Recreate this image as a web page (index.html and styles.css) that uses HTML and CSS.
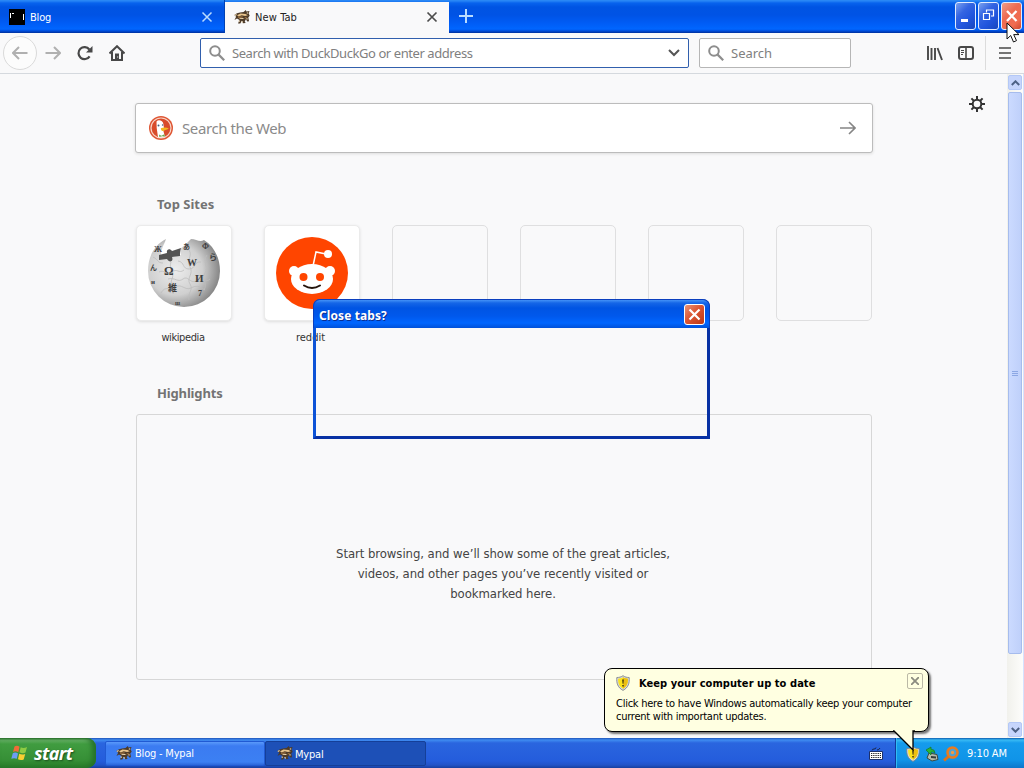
FILE: index.html
```html
<!DOCTYPE html>
<html lang="en">
<head>
    <meta charset="UTF-8">
    <meta name="viewport" content="width=device-width, initial-scale=1.0">
    <title>New Tab</title>
    <link rel="stylesheet" href="styles.css">
</head>
<body>

<!-- Shared icons -->
<svg class="icon-defs" width="0" height="0">
    <symbol id="badger" viewBox="0 0 16 16">
        <path d="M.3 6 3 4.200l3-.6 3.500-.6 2.400-2 .5 1.500L15.500 2l-.8 2.600 1 2.200-1.400 1.800.8 3.600-1.800.4-1.400-2.400-1.200 2.200 1 1.600-2.800.2-1-2.400-1.600 2.600H4L5.500 11 3 9.600.5 11l1.600-3.200z" fill="#4d3b29"/>
        <path d="M3 6.300 6.500 4.600l5 .4 2.400 1.200-2.800.8-3.400-.8-3 1.200z" fill="#e8c48c"/>
        <path d="m.8 6.400 1.800-.8M5.500 9.300l4 .2M12.800 4.200l1.400-.4M7.500 12.500l1.400.8M12.500 9.500l1 .8M4.500 12l1.500.2" stroke="#f1dbb4" stroke-width="1.100"/>
        <path d="M4 8.300 8.600 7.800M10.600 9l2-.6" stroke="#a8753c"/>
    </symbol>
    <symbol id="magnifier" viewBox="0 0 16 16">
        <circle cx="6" cy="6" r="4.800" fill="none" stroke="#8d8d8d" stroke-width="2"/>
        <path d="m9.600 9.600 5.600 5.600" stroke="#8d8d8d" stroke-width="2.200"/>
    </symbol>
    <symbol id="shield" viewBox="0 0 16 16">
        <path d="M8 .7c2 1.400 4 1.800 6.200 1.800.4 5.500-.7 10-6.200 12.900C2.500 12.500 1.400 8 1.800 2.500 4 2.500 6 2.100 8 .7z" fill="#d7d9dc" stroke="#777b80" stroke-width=".8"/>
        <path d="M8 2.200c1.500 1 3.200 1.300 4.900 1.500.1 4.300-.9 7.600-4.900 10.100C4 11.300 3 8 3.100 3.700 4.800 3.500 6.500 3.200 8 2.200z" fill="#fbe31c"/>
        <path d="M8 2.200c1.500 1 3.200 1.300 4.900 1.500.1 4.300-.9 7.600-4.900 10.100z" fill="#ecbf12"/>
        <path d="M7.200 4.500h1.600l-.4 4.300h-.8zM7.300 9.900h1.400v1.500H7.300z" fill="#332b10"/>
    </symbol>
</svg>

<!-- Browser -->
<div class="browser">
    <div class="tab-bar">
        <div class="tab">
            <svg class="tab-icon" width="16" height="16"><path d="M0 0h16v16H0z" fill="#000"/><path d="M1.500 4v5M14.500 5v6M3 4.500h2" stroke="#fff"/></svg>
            <span class="tab-title">Blog</span>
            <svg class="tab-close" width="12" height="12" viewBox="0 0 12 12"><path d="m1.500 1.500 9 9M10.500 1.500l-9 9" stroke="#b9dcff" stroke-width="1.500"/></svg>
        </div>
        <div class="tab active">
            <svg class="tab-icon" width="16" height="16"><use href="#badger"/></svg>
            <span class="tab-title">New Tab</span>
            <svg class="tab-close" width="12" height="12" viewBox="0 0 12 12"><path d="m1.500 1.500 9 9M10.500 1.500l-9 9" stroke="#4c4c4c" stroke-width="1.700"/></svg>
        </div>
        <svg class="new-tab" width="14" height="14"><path d="M7 0v14M0 7h14" stroke="#b9dcff" stroke-width="2"/></svg>
        <div class="window-buttons">
            <div class="win-btn"><svg width="19" height="26"><path d="M5 17.500h7" stroke="#fff" stroke-width="3"/></svg></div>
            <div class="win-btn"><svg width="19" height="26"><path d="M7.500 9.500V7h7v6H12M4.500 10.500h6v6h-6z" fill="none" stroke="#fff" stroke-width="1.200"/></svg></div>
            <div class="win-btn close"><svg width="19" height="26"><path d="m5 8 9.500 10M14.500 8 5 18" stroke="#fff" stroke-width="2.300"/></svg></div>
        </div>
    </div>

    <div class="nav-bar">
        <div class="back-btn"><svg width="16" height="14" viewBox="0 0 16 14"><path d="M15.500 7H1M7 1 1 7l6 6" fill="none" stroke="#b0b0b0" stroke-width="2"/></svg></div>
        <svg class="forward-btn" width="16" height="14" viewBox="0 0 16 14"><path d="M.5 7H15M9 1l6 6-6 6" fill="none" stroke="#b0b0b0" stroke-width="2"/></svg>
        <svg class="reload-btn" width="16" height="16" viewBox="0 0 16 16"><path d="M12.600 11.300A6 6 0 1 1 12.300 4.500" fill="none" stroke="#484848" stroke-width="2.200"/><path d="M15.500 1v6.500H9z" fill="#484848"/></svg>
        <svg class="home-btn" width="16" height="16" viewBox="0 0 16 16"><path d="M.5 8.500 8 1.200l7.500 7.300M3 7v8h10V7" fill="none" stroke="#484848" stroke-width="2"/><path d="M6 8.500h4V15H6z" fill="#484848"/><path d="M8.700 11.500v1" stroke="#fff"/></svg>
        <div class="url-bar">
            <svg width="16" height="16"><use href="#magnifier"/></svg>
            <span class="url-text">Search with DuckDuckGo or enter address</span>
            <svg class="url-arrow" width="12" height="8"><path d="m1 1 5 5 5-5" fill="none" stroke="#555" stroke-width="2"/></svg>
        </div>
        <div class="search-bar">
            <svg width="16" height="16"><use href="#magnifier"/></svg>
            <span class="search-text">Search</span>
        </div>
        <svg class="library-btn" width="16" height="16"><path d="M1 1v14M4.500 3v12M8 3v12M10.500 3l4.500 12" stroke="#484848" stroke-width="1.900"/></svg>
        <svg class="sidebar-btn" width="16" height="16"><rect x="1" y="2" width="14" height="12" rx="2" fill="none" stroke="#484848" stroke-width="2"/><path d="M8 2v12" stroke="#484848" stroke-width="1.600"/><path d="M3 5.500h3M3 7.500h3M3 9.500h2" stroke="#484848"/></svg>
        <div class="menu-box"><svg width="12" height="12"><path d="M0 1h12M0 6h12M0 11h12" stroke="#484848" stroke-width="1.700"/></svg></div>
    </div>

    <div class="viewport">
        <div class="page">
            <div class="web-search">
                <svg width="24" height="24" viewBox="0 0 24 24">
                    <circle cx="12" cy="12" r="12" fill="#df5735"/>
                    <circle cx="12" cy="12" r="10" fill="#d94c2b" stroke="#f7d5c8" stroke-width="1.200"/>
                    <path d="M7.500 5.500c2-2.300 6.500-1 7 3l.4 3.500-.5 3 1.600 6c-2.500 1-5 .9-7 .2L7.700 12z" fill="#fff"/>
                    <path d="M11.800 12.200c2-.8 5.500-1.200 8 .3-1 1.500-4 1-5.200 2.500-1.500.2-2.700-.6-2.800-2.800z" fill="#f4b522"/>
                    <path d="m10 18.500 2.400 1.200 3-1.400.4 2.400-2.500-.5-3 .8z" fill="#69a94b"/>
                    <circle cx="9.500" cy="9.500" r="1" fill="#44617c"/><circle cx="13.600" cy="9" r=".8" fill="#44617c"/>
                </svg>
                <span class="web-search-text">Search the Web</span>
                <svg class="go-arrow" width="16" height="14"><path d="M0 7h15M9 1l6 6-6 6" fill="none" stroke="#858585" stroke-width="1.600"/></svg>
            </div>

            <h2 class="section-title sites-title">Top Sites</h2>
            <div class="sites">
                <div class="site">
                    <div class="tile filled">
                        <svg width="76" height="76" viewBox="0 0 76 76">
                            <defs><radialGradient id="globe" cx=".38" cy=".45" r=".68"><stop offset="0" stop-color="#ededed"/><stop offset=".55" stop-color="#d0d0d0"/><stop offset="1" stop-color="#747474"/></radialGradient></defs>
                            <path d="M20 4C8 10 2 22 2 36a36 36 0 0 0 72 0C74 24 69 12 58 5c-4 3-8-1-13-1l-5 5-6 5 1 6-17 4-3-4c0-6 3-10 5-16z" fill="url(#globe)"/>
                            <path d="m13 20 8-2c-1-4 3-5 5-2l9-3c-1 3-1 5-1 8l-8 1c2 5-3 6-5 2l-8 1z" fill="#535353"/>
                            <path d="M7 22c6 3 4 6 10 6m-4 9c5-3 8 4 13 0s7 2 12-2m-6-9c7 1 4 8 11 8s5-8 12-7m-33 17c7-2 10 4 15 0s7 5 13 2 10 2 14-2M15 58c4-8 10-2 15-6s9 4 15 1 7-2 14 2M25 27c-3 8 4 11 1 17s4 8 1 15M43 15c4 6-3 10 1 17s-4 11 0 17-3 9-1 16M61 20c-5 7 2 12-2 18s3 10-1 17" fill="none" stroke="#bdbdbd" stroke-width=".8"/>
                            <g class="globe-letters">
                                <text x="18" y="40" font-size="12">Ω</text><text x="41" y="31" font-size="10">W</text><text x="49" y="47" font-size="11">И</text><text x="22" y="56" font-size="9">維</text>
                                <text x="63" y="25" font-size="8">ら</text><text x="8" y="17" font-size="8">Ж</text><text x="37" y="14" font-size="7">あ</text><text x="4" y="35" font-size="7">ん</text><text x="5" y="49" font-size="7">и</text><text x="56" y="14" font-size="8">Ф</text><text x="52" y="61" font-size="8">7</text><text x="29" y="70" font-size="6">ш</text>
                            </g>
                        </svg>
                    </div>
                    <span class="site-name wikipedia">wikipedia</span>
                </div>
                <div class="site">
                    <div class="tile filled">
                        <svg width="72" height="72" viewBox="0 0 72 72">
                            <circle cx="36" cy="36" r="36" fill="#ff4500"/>
                            <path d="m37 29 3-14 10 2" fill="none" stroke="#fff" stroke-width="1.500"/>
                            <circle cx="52" cy="17" r="4" fill="#fff"/><circle cx="18" cy="34" r="5" fill="#fff"/><circle cx="54" cy="34" r="5" fill="#fff"/>
                            <ellipse cx="36" cy="42" rx="21" ry="15" fill="#fff"/>
                            <circle cx="27.500" cy="40" r="4" fill="#ff4500"/><circle cx="44" cy="40" r="4" fill="#ff4500"/>
                            <path d="M28 48.500q8 5 16 0" fill="none" stroke="#25150d" stroke-width="2" stroke-linecap="round"/>
                        </svg>
                    </div>
                    <span class="site-name">reddit</span>
                </div>
                <div class="site"><div class="tile"></div></div>
                <div class="site"><div class="tile"></div></div>
                <div class="site"><div class="tile"></div></div>
                <div class="site"><div class="tile"></div></div>
            </div>

            <h2 class="section-title highlights-title">Highlights</h2>
            <div class="highlights">
                <p class="highlights-text">Start browsing, and we’ll show some of the great articles,<br>videos, and other pages you’ve recently visited or<br>bookmarked here.</p>
            </div>
        </div>
        <svg class="settings-btn" width="16" height="16" viewBox="-8 -8 16 16"><g stroke="#333" stroke-width="2"><circle r="4.300" fill="none"/><path d="M0-8v4M0 4v4M-8 0h4M4 0h4M-5.600-5.600l2.600 2.600M3 3l2.600 2.600M5.600-5.600 3-3M-3 3l-2.600 2.600"/></g></svg>
        <div class="scrollbar">
            <div class="scroll-btn"><svg width="9" height="6"><path d="m.8 5 3.700-3.700L8.200 5" fill="none" stroke="#4d6185" stroke-width="2"/></svg></div>
            <div class="scroll-thumb"><span></span><span></span><span></span></div>
            <div class="scroll-btn down"><svg width="9" height="6"><path d="m.8 1 3.700 3.700L8.200 1" fill="none" stroke="#4d6185" stroke-width="2"/></svg></div>
        </div>
    </div>
</div>

<!-- Dialog -->
<div class="dialog">
    <div class="dialog-title">
        <span class="dialog-name">Close tabs?</span>
        <div class="dialog-close"><svg width="19" height="19"><path d="m4.500 4.500 10 10M14.500 4.500l-10 10" stroke="#fff" stroke-width="2.200"/></svg></div>
    </div>
</div>

<!-- Taskbar -->
<div class="taskbar">
    <div class="start-btn">
        <svg width="18" height="18" viewBox="0 0 18 18">
            <path d="M3.500 2.500Q6 1 8.500 2.700L7.300 8.200Q4.500 6.600 2 8z" fill="#f06b38"/>
            <path d="M9.700 3.200q2.700 1.500 6.300-.2l-1.500 5.500q-3 1.500-6-.2z" fill="#8ecb43"/>
            <path d="M1.800 9.200q2.700-1.400 5.200.3l-1.200 5.300Q3 13.500.3 14.800z" fill="#6c9df5"/>
            <path d="M8.200 9.700q3 1.500 6 .2l-1.500 5.600q-3 1.300-5.700-.2z" fill="#f9cf32"/>
        </svg>
        <span class="start-text">start</span>
    </div>
    <div class="task"><svg width="16" height="16"><use href="#badger"/></svg><span class="task-name">Blog - Mypal</span></div>
    <div class="task pressed"><svg width="16" height="16"><use href="#badger"/></svg><span class="task-name">Mypal</span></div>
    <svg class="keyboard-icon" width="14" height="13"><path d="M.5 4.500h13v8H.5z" fill="#fff" stroke="#1b306c"/><path d="M2 6.500h10M2 8.500h10M2 10.500h10" stroke="#222" stroke-dasharray="1.300 .9"/><path d="M3 3.500q0-1.500 2-1.500t2-1.500M8 3q2 0 3-2" fill="none" stroke="#182648"/></svg>
    <div class="tray">
        <svg width="16" height="16"><use href="#shield"/></svg>
        <svg class="tray-eject" width="16" height="16"><path d="m5 7 8 1.500 1 5-6 1.500-5-3z" fill="#b6bcaa" stroke="#3c473d"/><path d="m7 10 5 .5v2l-5-.5z" fill="#353c3a"/><path d="M2 4 7 1v2.200q4 0 4 4-2-2-4-1V9z" fill="#29b634" stroke="#16752a" stroke-width=".7"/></svg>
        <svg class="tray-search" width="16" height="16"><circle cx="9.500" cy="6.500" r="5" fill="#4ba2d6" stroke="#e77c20" stroke-width="2.600"/><circle cx="9.500" cy="6.500" r="1.700" fill="#f29a42"/><path d="m5.500 10.500-4.500 4" stroke="#dd731a" stroke-width="3"/></svg>
        <span class="clock">9:10 AM</span>
    </div>
</div>

<!-- Notification -->
<div class="balloon">
    <svg class="balloon-tail" width="22" height="21"><path d="M1 0v1l19 18.500V0" fill="#ffffe1"/><path d="M0 1h1l19 19V1h2" fill="none" stroke="#000" stroke-width="1.300"/></svg>
    <div class="balloon-head">
        <svg width="16" height="16"><use href="#shield"/></svg>
        <strong class="balloon-title">Keep your computer up to date</strong>
        <div class="balloon-close"><svg width="8" height="8"><path d="m0 0 8 8M8 0 0 8" stroke="#8b8b80" stroke-width="1.800"/></svg></div>
    </div>
    <p class="balloon-text">Click here to have Windows automatically keep your computer<br>current with important updates.</p>
</div>

<svg class="cursor" width="14" height="22"><path d="M1 1v16l3.700-3.500L7.500 20l3-1.400-2.800-6H13z" fill="#fff" stroke="#111"/></svg>

</body>
</html>
```
FILE: styles.css
```css
* {
    box-sizing: border-box;
}
body {
    margin: 0;
    width: 1024px;
    height: 768px;
    overflow: hidden;
    position: relative;
    display: flex;
    flex-direction: column;
    background: #f9f9fa;
    font-family: "DejaVu Sans Condensed", "DejaVu Sans", sans-serif;
    font-stretch: condensed;
    font-size: 11px;
    color: #111;
}
svg {
    display: block;
    flex-shrink: 0;
}
span, strong {
    white-space: nowrap;
}
.icon-defs {
    position: absolute;
}
.browser {
    height: 738px;
    display: flex;
    flex-direction: column;
}

/* Tabs */
.tab-bar {
    height: 33px;
    display: flex;
    background: linear-gradient(#2d8bf5 0, #2583f5 1px, #0863ed 3px, #0054e3 7px, #0053e5 15px, #005cf5 23px, #0066ff 29px, #005af0 30px, #003dba 32px, #00309b);
}
.tab {
    width: 225px;
    display: flex;
    align-items: center;
    padding: 1px 11px 0 9px;
    color: #fff;
    border-right: 1px solid #0041b4;
}
.tab.active {
    width: 224px;
    margin-top: 2px;
    padding-bottom: 2px;
    background: #f9f9fa;
    color: #222;
    border: none;
}
.tab-title {
    margin-left: 5px;
    letter-spacing: -0.2px;
}
.tab.active .tab-title {
    letter-spacing: 0.1px;
}
.tab-close {
    margin-left: auto;
}
.new-tab {
    margin: 9px 0 0 10px;
}
.window-buttons {
    margin-left: auto;
    display: flex;
    gap: 2px;
    padding: 2px 2px 0 0;
}
.win-btn {
    width: 21px;
    height: 28px;
    border: 1px solid #e1ecff;
    border-radius: 3px;
    background: linear-gradient(135deg, #7ba1ef, #3465e2 35%, #2155dd 65%, #1747bd);
}
.win-btn.close {
    background: linear-gradient(135deg, #f29c87, #ed6b52 40%, #f16c50 75%, #cf482c);
}

/* Toolbar */
.nav-bar {
    height: 41px;
    display: flex;
    align-items: center;
    padding-left: 3px;
    background: #f9f9fa;
    border-bottom: 1px solid #d5d9de;
}
.back-btn {
    width: 34px;
    height: 34px;
    border: 1px solid #dadada;
    border-radius: 50%;
    background: #fcfcfc;
    display: flex;
    align-items: center;
    justify-content: center;
}
.forward-btn {
    margin-left: 8px;
}
.reload-btn, .home-btn {
    margin-left: 16px;
}
.url-bar, .search-bar {
    height: 30px;
    display: flex;
    align-items: center;
    padding: 0 8px;
    background: #fff;
    border-radius: 2px;
    color: #808080;
    font-family: "Noto Sans", sans-serif;
    font-stretch: normal;
    font-size: 13px;
}
.url-bar {
    width: 489px;
    margin-left: 75px;
    border: 1px solid #315fad;
}
.url-text, .search-text {
    margin-left: 7px;
}
.url-text {
    letter-spacing: -0.43px;
}
.url-arrow {
    margin-left: auto;
}
.search-bar {
    width: 152px;
    margin-left: 10px;
    border: 1px solid #b6b6b6;
}
.library-btn {
    margin-left: 76px;
}
.sidebar-btn {
    margin-left: 15px;
}
.menu-box {
    height: 34px;
    margin-left: 11px;
    padding-left: 13px;
    border-left: 1px solid #dcdcdc;
    display: flex;
    align-items: center;
}

/* New tab page */
.viewport {
    flex: 1;
    display: flex;
    background: #f9f9fa;
}
.page {
    width: 738px;
    margin-left: 135px;
    padding-top: 29px;
}
.web-search {
    height: 50px;
    display: flex;
    align-items: center;
    padding: 0 16px 0 13px;
    background: #fff;
    border: 1px solid #bcbcbc;
    border-radius: 3px;
    box-shadow: 0 1px 3px #ddd;
}
.web-search-text {
    margin-left: 9px;
    font-family: "Noto Sans", sans-serif;
    font-stretch: normal;
    font-size: 15px;
    letter-spacing: -0.4px;
    color: #8a8a8a;
}
.go-arrow {
    margin-left: auto;
}
.section-title {
    margin: 0 0 0 22px;
    font: bold 13px/20px "Noto Sans", sans-serif;
    color: #737373;
}
.sites-title {
    margin-top: 41px;
}
.sites {
    display: flex;
    gap: 32px;
    padding: 11px 1px 0;
    height: 129px;
}
.site {
    width: 96px;
    text-align: center;
}
.tile {
    width: 96px;
    height: 96px;
    border: 1px solid #dfdfe0;
    border-radius: 5px;
    margin-bottom: 10px;
}
.tile.filled {
    display: flex;
    align-items: center;
    justify-content: center;
    border-color: #ebebeb;
    background: #fff;
    box-shadow: 0 1px 3px #ddd;
}
.globe-letters {
    font-family: "Liberation Serif", "Noto Sans CJK JP", serif;
    font-weight: bold;
    fill: #3f3f3f;
}
.site-name {
    color: #333;
    margin-right: 3px;
}
.site-name.wikipedia {
    letter-spacing: -0.4px;
    margin-right: 2px;
}
.highlights-title {
    margin-top: 40px;
    letter-spacing: -0.15px;
}
.highlights {
    width: 736px;
    height: 266px;
    margin: 11px 0 0 1px;
    border: 1px solid #d7d7d7;
    border-radius: 3px;
    padding-top: 129px;
}
.highlights-text {
    margin: 0 2px 0 0;
    line-height: 20px;
    font-size: 13px;
    letter-spacing: -0.06px;
    text-align: center;
    color: #444;
}
.settings-btn {
    margin: 22px 0 0 96px;
}
.scrollbar {
    width: 17px;
    margin-left: auto;
    padding: 1px 1px 1px 1px;
    border-right: 1px solid #d5e2ff;
    background: linear-gradient(90deg, #f1f1ec, #fdfdfb);
    display: flex;
    flex-direction: column;
    align-items: center;
}
.scroll-btn {
    width: 14px;
    height: 15px;
    border: 1px solid #b4c8f6;
    border-radius: 2px;
    background: #c6d5fc;
    display: flex;
    align-items: center;
    justify-content: center;
}
.scroll-thumb {
    width: 14px;
    height: 562px;
    margin-top: 2px;
    border: 1px solid #a6bced;
    border-radius: 2px;
    background: linear-gradient(90deg, #cbdaff, #bfd0fa);
    display: flex;
    flex-direction: column;
    justify-content: center;
    align-items: center;
    gap: 1px;
}
.scroll-thumb span {
    width: 6px;
    height: 1px;
    background: #8ca7e4;
}
.scroll-btn.down {
    margin-top: auto;
}

/* Close tabs window */
.dialog {
    position: absolute;
    left: 313px;
    top: 299px;
    width: 397px;
    height: 140px;
    border: 3px solid #0b3fbe;
    border-top: none;
    border-right-color: #0831a4;
    border-bottom-color: #0831a4;
    border-left-color: #0d53d7;
    border-radius: 8px 8px 0 0;
}
.dialog-title {
    height: 29px;
    margin: 0 -3px;
    padding: 1px 4px 0 5px;
    border-radius: 7px 7px 0 0;
    border: 1px solid #0b3fbe;
    border-bottom: none;
    background: linear-gradient(#4392f7 0, #1566e7 3px, #0054e3 8px, #0058ec 16px, #0066ff 23px, #0051d9 28px);
    display: flex;
    align-items: center;
    color: #fff;
}
.dialog-name {
    padding-top: 1px;
    font: bold 12px "Noto Sans", sans-serif;
    letter-spacing: 0.1px;
    text-shadow: 1px 1px #0a2e91;
}
.dialog-close {
    width: 21px;
    height: 21px;
    margin-left: auto;
    border: 1px solid #fff;
    border-radius: 3px;
    background: linear-gradient(135deg, #e99475, #dc5633 45%, #bc3714);
}

/* Taskbar */
.taskbar {
    height: 30px;
    display: flex;
    align-items: center;
    background: linear-gradient(#1f55b8 0, #3f8cf1 2px, #2a65df 5px, #245cdc 23px, #2253c8 27px, #173f9f);
    color: #fff;
}
.start-btn {
    width: 96px;
    height: 30px;
    display: flex;
    align-items: center;
    padding-left: 11px;
    border-radius: 0 9px 9px 0;
    background: linear-gradient(#2c6b2b 0, #67b267 2px, #409c40 6px, #368f36 22px, #287c28);
    box-shadow: inset -4px 0 5px #26722a;
}
.start-text {
    margin-left: 5px;
    font: italic bold 18px "Noto Sans", sans-serif;
    letter-spacing: -0.6px;
    text-shadow: 1px 1px 2px #194d1c;
}
.task {
    width: 160px;
    height: 25px;
    display: flex;
    align-items: center;
    padding-left: 10px;
    border: 1px solid #205ad3;
    border-radius: 2px;
    background: linear-gradient(#5a99fa, #3b7bf1 4px, #3c80f3 20px, #2c66d9);
}
.start-btn + .task {
    margin-left: 9px;
}
.task.pressed {
    width: 161px;
    padding-left: 11px;
    background: #1d50b7;
    border-color: #153f98;
}
.task-name {
    margin-left: 3px;
    letter-spacing: -0.2px;
}
.task.pressed .task-name {
    margin: 2px 0 0 2px;
}
.keyboard-icon {
    margin-left: auto;
    margin-right: 12px;
}
.tray {
    width: 129px;
    height: 30px;
    padding: 1px 0 0 9px;
    border-left: 1px solid #113b9a;
    background: linear-gradient(#0e5cae 0, #38baf4 2px, #159bec 5px, #1094e8 22px, #0d76ca);
    box-shadow: inset 1px 0 #31bdf3;
    display: flex;
    align-items: center;
}
.tray-eject, .tray-search {
    margin-left: 3px;
}
.clock {
    margin-left: 8px;
    letter-spacing: -0.1px;
}

/* Update balloon */
.balloon {
    position: absolute;
    left: 604px;
    top: 668px;
    width: 325px;
    height: 64px;
    padding: 5px 5px 0 11px;
    background: #ffffe1;
    border: 1px solid #000;
    border-radius: 8px;
    box-shadow: 2px 2px 2px #777;
    color: #000;
}
.balloon-head {
    display: flex;
    align-items: center;
    height: 17px;
    margin-left: -1px;
}
.balloon-title {
    margin-left: 8px;
    padding-top: 1px;
    letter-spacing: 0.06px;
}
.balloon-close {
    width: 16px;
    height: 16px;
    margin: -3px 0 0 auto;
    border: 1px solid #bbb9a6;
    border-radius: 2px;
    display: flex;
    align-items: center;
    justify-content: center;
}
.balloon-text {
    margin: 6px 0 0;
    line-height: 13px;
    letter-spacing: -0.25px;
    white-space: nowrap;
}
.balloon-tail {
    position: absolute;
    left: 288px;
    top: 61px;
}
.cursor {
    position: absolute;
    left: 1006px;
    top: 22px;
}
```
